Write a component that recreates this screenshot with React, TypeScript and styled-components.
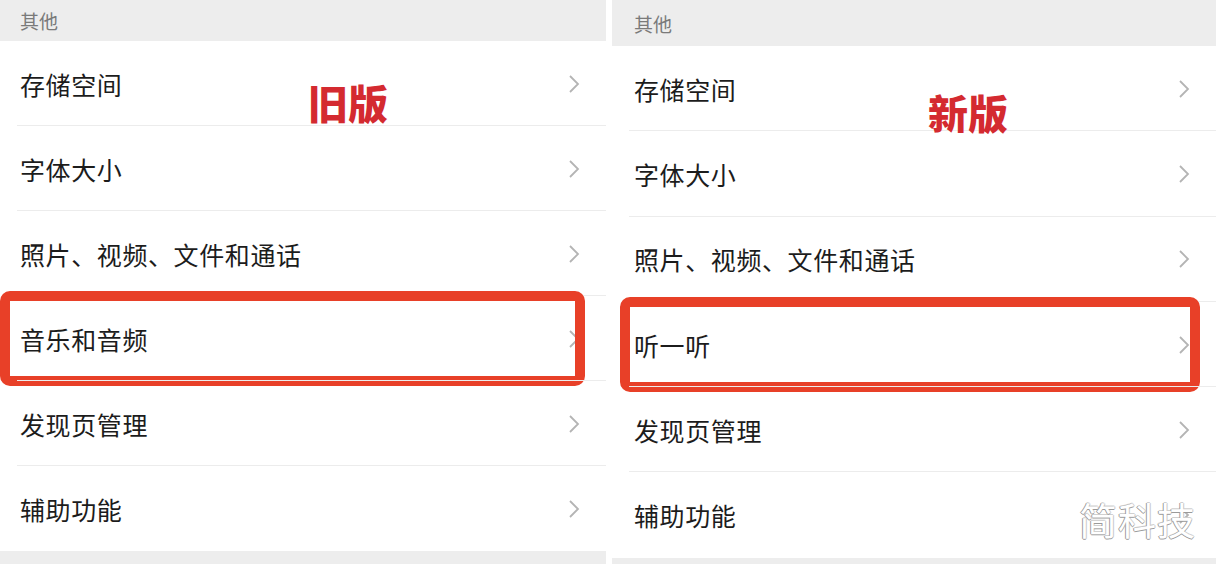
import React from "react";
import styled, { createGlobalStyle } from "styled-components";

const GlobalStyle = createGlobalStyle`
  html, body {
    margin: 0;
    padding: 0;
    background: #ffffff;
  }
  body {
    font-family: "Noto Sans CJK SC", "Noto Sans", sans-serif;
  }
`;

const Page = styled.div`
  width: 1216px;
  height: 564px;
  overflow: hidden;
  display: flex;
  gap: 6px;
  background: #ffffff;
`;

const Panel = styled.div<{ $width: number }>`
  width: ${({ $width }) => $width}px;
  height: 564px;
  display: flex;
  flex-direction: column;
  background: #ededed;
  position: relative;
`;

const SectionHeader = styled.div<{ $height: number; $pad: number }>`
  height: ${({ $height }) => $height}px;
  padding-left: ${({ $pad }) => $pad}px;
  display: flex;
  align-items: center;
  font-size: 19px;
  color: #7a7a7a;
  box-sizing: border-box;
`;

const List = styled.div`
  background: #ffffff;
  display: flex;
  flex-direction: column;
`;

const Row = styled.div<{ $height: number; $pad: number; $last?: boolean }>`
  position: relative;
  height: ${({ $height }) => $height}px;
  display: flex;
  align-items: center;
  justify-content: space-between;
  padding-left: ${({ $pad }) => $pad}px;
  padding-right: 26px;
  box-sizing: border-box;
  font-size: 25px;
  color: #1c1c1c;

  &::after {
    content: "";
    display: ${({ $last }) => ($last ? "none" : "block")};
    position: absolute;
    left: 17px;
    right: 0;
    bottom: 0;
    height: 1px;
    background: #ececec;
  }
`;

const Label = styled.span`
  letter-spacing: 0.6px;
`;

const Highlight = styled.div<{ $l: number; $r: number }>`
  position: absolute;
  left: ${({ $l }) => $l}px;
  right: ${({ $r }) => $r}px;
  top: -5px;
  bottom: -5px;
  border: 10px solid #e84028;
  border-radius: 10px;
  pointer-events: none;
`;

const Stamp = styled.div<{ $top: number; $left: number }>`
  position: absolute;
  top: ${({ $top }) => $top}px;
  left: ${({ $left }) => $left}px;
  font-size: 40px;
  font-weight: 900;
  color: #d42a30;
  line-height: 1;
`;

const Watermark = styled.div`
  position: absolute;
  right: 20px;
  bottom: 26px;
  font-size: 38px;
  color: #ffffff;
  line-height: 1;
  letter-spacing: 1px;
  text-shadow: -1px 0 #9a9a9a, 0 1px #9a9a9a, 1px 0 #d0d0d0, 0 -1px #d0d0d0;
`;

const Chevron = () => (
  <svg width="12" height="20" viewBox="0 0 12 20">
    <polyline
      points="2,2 10,10 2,18"
      fill="none"
      stroke="#b4b4b4"
      strokeWidth="1.8"
      strokeLinejoin="miter"
    />
  </svg>
);

type Side = {
  width: number;
  header: number;
  row: number;
  pad: number;
  items: string[];
  hl: { l: number; r: number };
  stamp: { text: string; top: number; left: number };
};

const sides: Side[] = [
  {
    width: 606,
    header: 41,
    row: 85,
    pad: 20,
    items: ["存储空间", "字体大小", "照片、视频、文件和通话", "音乐和音频", "发现页管理", "辅助功能"],
    hl: { l: 0, r: 21 },
    stamp: { text: "旧版", top: 82, left: 308 },
  },
  {
    width: 604,
    header: 46,
    row: 85.3,
    pad: 22,
    items: ["存储空间", "字体大小", "照片、视频、文件和通话", "听一听", "发现页管理", "辅助功能"],
    hl: { l: 8, r: 16 },
    stamp: { text: "新版", top: 92, left: 316 },
  },
];

export default function App() {
  return (
    <>
      <GlobalStyle />
      <Page>
        {sides.map((s, si) => (
          <Panel key={si} $width={s.width}>
            <SectionHeader $height={s.header} $pad={s.pad}>
              其他
            </SectionHeader>
            <List>
              {s.items.map((it, i) => (
                <Row key={it} $height={s.row} $pad={s.pad} $last={i === s.items.length - 1}>
                  <Label>{it}</Label>
                  <Chevron />
                  {i === 3 && <Highlight $l={s.hl.l} $r={s.hl.r} />}
                </Row>
              ))}
            </List>
            <Stamp $top={s.stamp.top} $left={s.stamp.left}>
              {s.stamp.text}
            </Stamp>
            {si === 1 && <Watermark>简科技</Watermark>}
          </Panel>
        ))}
      </Page>
    </>
  );
}
